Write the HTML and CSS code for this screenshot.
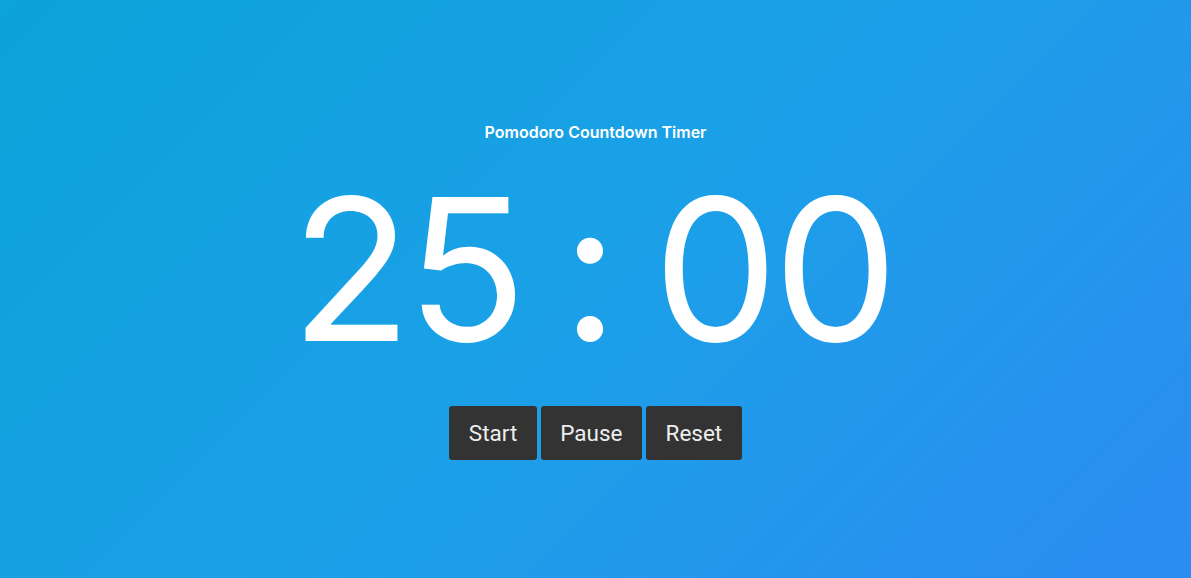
FILE: index.html
```html
<!DOCTYPE html>
<html>
<head>
<meta charset="utf-8">
<link rel="stylesheet" href="styles.css">
</head>
<body>
<main class="app">
  <h1 class="title">Pomodoro Countdown Timer</h1>
  <div class="clock">25 : 00</div>
  <div class="controls">
    <button class="btn">Start</button>
    <button class="btn">Pause</button>
    <button class="btn">Reset</button>
  </div>
</main>
</body>
</html>
```
FILE: styles.css
```css
html, body {
  margin: 0;
  height: 100%;
}
body {
  background: linear-gradient(135deg, #0ca3d9 0%, #1ba0e8 50%, #2c8cf1 100%);
  font-family: Inter, Roboto, "Liberation Sans", sans-serif;
  color: #fff;
}
.app {
  display: flex;
  flex-direction: column;
  align-items: center;
  padding-top: 121px;
}
.title {
  margin: 0;
  font-size: 16px;
  font-weight: 600;
  line-height: 22px;
}
.clock {
  margin-top: 27px;
  padding-right: 7px;
  font-size: 198px;
  line-height: 198px;
  font-weight: 400;
  letter-spacing: -5px;
  word-spacing: -11px;
}
.controls {
  margin-top: 38px;
  display: flex;
  gap: 4px;
}
.btn {
  background: #333;
  color: #eee;
  border: none;
  border-radius: 3px;
  font-family: Roboto, "Liberation Sans", sans-serif;
  font-size: 22.5px;
  height: 54px;
  padding: 0 19.5px;
}
```
